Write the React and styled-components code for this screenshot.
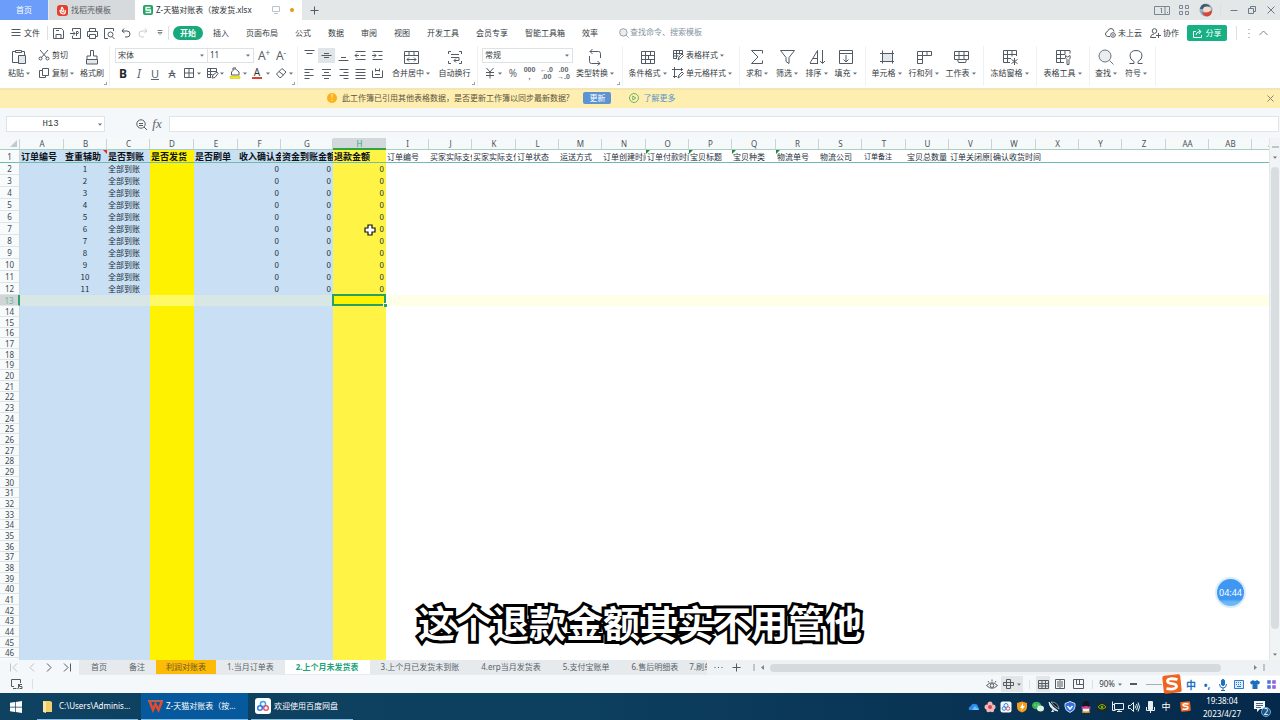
import React from "react";
import styled, { createGlobalStyle, css } from "styled-components";

const UI = '"Noto Sans", "Noto Sans CJK SC", sans-serif';
const CELL = '"Noto Sans CJK SC", sans-serif';

const Global = createGlobalStyle`
  *, *::before, *::after { box-sizing: border-box; }
  html, body { margin: 0; }
  body { font: 8px/12px ${UI}; color: #353b41; overflow: hidden; }
  button, input, select { font: inherit; color: inherit; margin: 0; padding: 0; border: 0; background: none; border-radius: 0; outline: 0; }
  button { white-space: nowrap; }
  svg { display: block; flex: none; overflow: visible; }
`;

/* ---------- icons ---------- */

const Glyph = ({ w = 16, h = 16, sw = 1, color = "#525b63", children }) => (
  <svg width={w} height={h} viewBox={`0 0 ${w} ${h}`} fill="none" stroke={color} strokeWidth={sw} aria-hidden="true">
    {children}
  </svg>
);

const Lines = ({ d, ...p }) => (
  <Glyph {...p}>
    <path d={d} />
  </Glyph>
);

const Caret = ({ color = "#6b7379" }) => (
  <svg width="4" height="3" viewBox="0 0 4 3" aria-hidden="true">
    <path d="M0 0.500h4L2 2.800z" fill={color} />
  </svg>
);

const PasteIcon = () => (
  <Glyph>
    <path d="M4 2.500H1.500v11H8M11 2.500h2.500V6M4.500 1.500h6v2h-6z" />
    <path d="M7.500 6.500h7v8h-7z" fill="#e3e8ec" />
  </Glyph>
);
const CutIcon = () => (
  <Glyph w={12} h={12}>
    <path d="M2 1l7 8M10 1L3 9" />
    <circle cx="2.500" cy="9.500" r="1.500" />
    <circle cx="9.500" cy="9.500" r="1.500" />
  </Glyph>
);
const CopyIcon = () => <Lines w={12} h={12} d="M4.500 1.500h6v7h-6zM4.500 3.500h-3v7h6v-2" />;
const BrushIcon = () => (
  <Glyph>
    <path d="M6.500 7V1.500h3V7h3.500v3.500h-10V7z" />
    <path d="M2.500 10.500h11v4.500h-11z" fill="#e3e8ec" />
  </Glyph>
);
const BorderIcon = () => <Lines w={12} h={12} d="M1.500 1.500h9v9h-9zM6 1.500v9M1.500 6h9" />;
const EditCellIcon = () => <Lines w={12} h={12} d="M10.500 5V1.500h-9v9H5M1.500 4.500h9M1.500 7.500h5M4.500 1.500v9M6 11l1-3 4-3 1 1.500-3 4z" />;
const FillIcon = () => (
  <Glyph w={12} h={12}>
    <path d="M2.500 5L6 1.500 10 5v3H2.500zM4 3V1h3" />
    <path d="M1 9h10v2.500H1z" fill="#f6e71d" stroke="#c9bb2a" strokeWidth="0.500" />
  </Glyph>
);
const EraserIcon = () => <Lines w={12} h={12} d="M1.500 7L7 1.500 11 5 6 10.500H4.500zM4 4.500L8.500 8" />;

const align = {
  top: "M1.500 1.500h10M3.500 4.500h6",
  middle: "M1.500 6.500h10M4 4.500h5M4 8.500h5",
  bottom: "M1.500 11.500h10M4 8.500h5",
  outdent: "M1.500 2.500h10M6.500 6.500h5M1.500 10.500h10M1 6.500h4M3 4.500l-2 2 2 2",
  indent: "M1.500 2.500h10M7.500 6.500h4M1.500 10.500h10M1 6.500h4M3 4.500l2 2-2 2",
  left: "M1.500 2.500h9M1.500 5.500h5M1.500 8.500h9M1.500 11.500h5",
  center: "M2 2.500h9M4 5.500h5M2 8.500h9M4 11.500h5",
  right: "M2.500 2.500h9M6.500 5.500h5M2.500 8.500h9M6.500 11.500h5",
  justify: "M1.500 2.500h10M1.500 5.500h10M1.500 8.500h10M1.500 11.500h10",
  spread: "M1.500 3.500v7h10v-7M4 3.500h5M4.500 1.500v3M8.500 1.500v3M4 7.500h5",
};
const AlignIcon = ({ kind }) => <Lines w={13} h={13} d={align[kind]} />;

const MergeIcon = () => <Lines d="M1.500 2.500h14v12h-14zM1.500 6.500h14M6 2.500v4M11 2.500v4M4 10.500h9M6 8.500l-2 2 2 2M11 8.500l2 2-2 2" />;
const WrapIcon = () => <Lines d="M4 2.500H1.500V5M12 2.500h2.500V5M4 14.500H1.500V12M12 14.500h2.500V12M4 5.500h8M4 8.500h8v3H7M9 9.500l-2 2 2 2" />;
const ConvertIcon = () => <Lines d="M13.500 9V4.500q0-2-2-2H3M5.500 0L3 2.500 5.500 5M2.500 7v5.500q0 2 2 2H13M10.500 12l2.500 2.500-2.500 2" />;
const CondIcon = () => <Lines d="M1.500 2.500h13v12h-13zM1.500 6.500h13M1.500 10.500h13M5.500 2.500v4M10.500 2.500v4M8.500 6.500v4M5.500 6.500v8M10.500 10.500v4" />;
const TableStyleIcon = () => <Lines w={12} h={12} d="M10.500 5V1.500h-9v8H5M1.500 4.500h9M1.500 7h5M4.500 1.500v8M7.500 1.500v4M6 11l1-3 3-3 1.500 1.500-3 3z" />;
const CellStyleIcon = () => <Lines w={12} h={12} d="M0 2.500h11M2.500 0v11M9.500 1v3M1 9.500h4M6 11l1-3 3-3 1.500 1.500-3 3z" />;
const SumIcon = () => <Lines d="M13.500 4.500v-3h-11L9 8l-6.500 6.500h11v-3" />;
const FunnelIcon = () => <Lines d="M1.500 1.500h14L10 8.500v6l-3-2v-4z" />;
const SortIcon = () => <Lines d="M1 14L8.500 1.500V14M1 14.500h8M4 9.500h4.500M13.500 1v13M11 12l2.500 2.500L16 12" />;
const FillDownIcon = () => <Lines d="M1.500 1.500h13v13h-13zM1.500 4.500h13M8 6v7M5.500 10.500L8 13l2.500-2.500" />;
const CellIcon = () => (
  <Glyph>
    <path d="M3.500 4.500h10v8h-10z" fill="#e3e8ec" />
    <path d="M1 4.500h14M1 12.500h14M3.500 1.500v13M13.500 1.500v13" />
  </Glyph>
);
const RowColIcon = () => <Lines d="M1.500 2.500h14v4h-9v8h-5zM6.500 2.500v4M11 2.500v4M1.500 6.500h5M1.500 10.500h5" />;
const SheetIcon = () => <Lines d="M1.500 2.500h14v8h-2l-1 3h-7l-1-3h-3zM1.500 6.500h14M6 2.500v8M11 2.500v8M4.500 10.500h9" />;
const FreezeIcon = () => <Lines d="M14.500 7V1.500h-13v12H8M1.500 5.500h13M1.500 9.500H9M5.500 1.500v12M10 1.500v6M12.500 9v7M9.500 10.500l6 4M15.500 10.500l-6 4" />;
const ToolsIcon = () => <Lines d="M15 4.500v-3H1.500v12H9M1.500 5.500H10M1.500 9.500H10M5.500 1.500v12M10 1.500v4M12 15.500v-5q-2-1-1.500-4l2 1.500L15 6.500q1 3-1 4v5z" />;
const FindIcon = ({ s = 16 }) => (
  <svg width={s} height={s} viewBox="0 0 16 16" fill="none" stroke="#6b747b" aria-hidden="true">
    <circle cx="7" cy="7" r="6" fill="#e9edef" />
    <path d="M11.500 11.500l4 4" />
  </svg>
);
const OmegaIcon = () => <Lines d="M1.500 14.500H6v-2Q2 10.500 2 7q0-5.500 6-5.500T14 7q0 3.500-4 5.500v2h4.500" />;

/* ---------- title bar ---------- */

const Window = styled.div`
  display: flex;
  flex-direction: column;
  height: 100vh;
  position: relative;
  overflow: hidden;
  background: #fff;
`;
const TitleBar = styled.header`
  display: flex;
  align-items: center;
  flex: none;
  height: 20px;
  background: #e3e7e8;
`;
const FileTab = styled.button`
  display: flex;
  align-items: center;
  gap: 3px;
  height: 20px;
  width: ${(p) => p.$w}px;
  padding: 0 8px;
  justify-content: ${(p) => (p.$home ? "center" : "flex-start")};
  background: ${(p) => (p.$home ? "#6c9dfb" : p.$active ? "#fff" : "#d6dadd")};
  color: ${(p) => (p.$home ? "#fff" : p.$active ? "#2b3036" : "#5a6066")};
  margin-right: ${(p) => (p.$home ? 1 : 0)}px;
`;
const TabEnd = styled.span`
  display: flex;
  align-items: center;
  gap: 10px;
  margin-left: auto;
`;
const ModifiedDot = styled.span`
  width: 4px;
  height: 4px;
  border-radius: 50%;
  background: #e09a1c;
`;
const IconButton = styled.button`
  display: flex;
  align-items: center;
  justify-content: center;
  flex: none;
  width: ${(p) => p.$w || 16}px;
  height: ${(p) => p.$h || 15}px;
  background: ${(p) => (p.$on ? "#dfe5e9" : "transparent")};
`;
const Spacer = styled.div`
  flex: 1;
`;
const Rule = styled.span`
  flex: none;
  width: 1px;
  height: ${(p) => p.$h || 14}px;
  margin: 0 ${(p) => p.$m || 0}px;
  background: #dde1e4;
`;

/* ---------- menu row ---------- */

const MenuBar = styled.nav`
  display: flex;
  align-items: center;
  flex: none;
  height: 26px;
  padding-right: 6px;
`;
const FileMenu = styled.button`
  display: flex;
  align-items: center;
  gap: 3px;
  width: 47px;
  padding-left: 11px;
`;
const QuickTools = styled.div`
  display: flex;
  align-items: center;
  gap: 1px;
  padding-left: 2px;
`;
const MenuItems = styled.div`
  display: flex;
  align-items: center;
  gap: 17px;
  padding-left: 4px;
`;
const MenuItem = styled.button`
  height: 14px;
  line-height: 12px;
  ${(p) =>
    p.$active &&
    css`
      width: 30px;
      margin-right: -7px;
      border-radius: 7px;
      background: #16a97c;
      color: #fff;
      font-weight: 700;
    `}
`;
const SearchBox = styled.label`
  display: flex;
  align-items: center;
  gap: 1px;
  margin-left: 21px;
  input {
    width: 90px;
    height: 12px;
    margin-bottom: 2px;
  }
  input::placeholder {
    color: #8494a4;
    opacity: 1;
  }
`;
const AccountLink = styled.button`
  display: flex;
  align-items: center;
  gap: 2px;
  margin-right: 8px;
`;
const ShareButton = styled.button`
  display: flex;
  align-items: center;
  justify-content: center;
  gap: 4px;
  width: 40px;
  height: 16px;
  border-radius: 2px;
  background: #16b084;
  color: #fff;
`;

/* ---------- ribbon ---------- */

const Ribbon = styled.section`
  display: flex;
  flex: none;
  height: 42px;
  overflow: hidden;
`;
const Group = styled.div`
  display: flex;
  flex: none;
  position: relative;
  width: ${(p) => p.$w}px;
  height: 40px;
  padding-left: ${(p) => p.$pad || 0}px;
  border-right: 1px solid #eff2f3;
  ${(p) =>
    p.$corner &&
    css`
      &::after {
        content: "";
        position: absolute;
        right: 2px;
        bottom: 1px;
        width: 3px;
        height: 3px;
        border: solid #9aa1a7;
        border-width: 0 1px 1px 0;
      }
    `}
`;
const Big = styled.button`
  display: flex;
  flex-direction: column;
  align-items: center;
  flex: none;
  gap: 2px;
  width: ${(p) => p.$w}px;
  height: 38px;
  padding-top: 3px;
`;
const Caption = styled.span`
  display: flex;
  align-items: center;
  gap: 2px;
`;
const Stack = styled.div`
  display: flex;
  flex-direction: column;
  gap: 2px;
  width: ${(p) => p.$w}px;
  padding-top: 1px;
`;
const Row = styled.div`
  display: flex;
  align-items: center;
  height: 16px;
`;
const Small = styled.button`
  display: flex;
  align-items: center;
  gap: 2px;
  height: 16px;
`;
const Split = styled.button`
  display: flex;
  align-items: center;
  justify-content: space-between;
  width: 23px;
  height: 16px;
  padding: 0 3px 0 2px;
`;
const Letter = styled.button`
  width: ${(p) => p.$w || 16}px;
  height: 16px;
  line-height: 15px;
  font-size: ${(p) => p.$size || 12}px;
  font-weight: ${(p) => (p.$bold ? 700 : 400)};
  font-style: ${(p) => (p.$italic ? "italic" : "normal")};
  text-decoration: ${(p) => p.$deco || "none"};
  color: ${(p) => (p.$bold ? "#23282d" : "#5b646c")};
  sup {
    font-size: 8px;
    line-height: 0;
    vertical-align: 4px;
  }
`;
const NumLabel = styled.button`
  width: 17px;
  height: 16px;
  font: 700 7px/7px "Liberation Sans", sans-serif;
  white-space: pre-line;
  color: #5b646c;
`;
const RedA = styled.span`
  display: block;
  width: 10px;
  height: 12px;
  line-height: 10px;
  font-size: 10px;
  text-align: center;
  border-bottom: 2px solid #d8442f;
`;
const SelectFrame = styled.label`
  display: flex;
  align-items: center;
  position: relative;
  width: ${(p) => p.$w}px;
  height: 15px;
  border: 1px solid #dde2e5;
  margin-left: ${(p) => (p.$join ? -1 : 0)}px;
  padding-right: 3px;
  select {
    flex: 1;
    min-width: 0;
    appearance: none;
    padding-left: 2px;
    height: 13px;
  }
`;

/* ---------- banner and formula bar ---------- */

const Banner = styled.div`
  display: flex;
  align-items: center;
  flex: none;
  height: 20px;
  padding: 0 6px 2px 327px;
  background: #feeeb0;
  border-top: 2px solid #f4e5b4;
  color: #5c553f;
  a {
    margin-left: 4px;
    color: #5b97c9;
    text-decoration: none;
  }
`;
const WarnDot = styled.span`
  width: 10px;
  height: 10px;
  margin-right: 5px;
  border-radius: 50%;
  background: #fbb117;
  color: #fff;
  line-height: 10px;
  text-align: center;
`;
const UpdateButton = styled.button`
  width: 28px;
  height: 12px;
  margin: 0 18px 0 14px;
  border-radius: 2px;
  background: #5b93d3;
  color: #fff;
`;
const FormulaBar = styled.div`
  display: flex;
  align-items: center;
  flex: none;
  height: 30px;
  padding: 2px 1px 0 6px;
  background: #f5f8fa;
`;
const NameBox = styled.label`
  display: flex;
  align-items: center;
  width: 99px;
  height: 16px;
  margin-right: 30px;
  padding-right: 2px;
  border: 1px solid #dfe4e7;
  background: #fff;
  input {
    flex: 1;
    min-width: 0;
    padding-right: 4px;
    text-align: center;
    font: 9px/12px "Liberation Mono", monospace;
  }
`;
const FxButton = styled.button`
  width: 20px;
  margin-right: 2px;
  font: italic 13px/14px "Liberation Serif", serif;
  color: #5b646c;
`;
const FormulaInput = styled.input`
  flex: 1;
  height: 16px;
  border: 1px solid #dfe4e7;
  background: #fff;
  padding: 0 4px;
`;

/* ---------- sheet ---------- */

const SheetArea = styled.main`
  display: flex;
  flex: 1;
  min-height: 0;
  position: relative;
`;
const GridView = styled.div`
  flex: 1;
  min-width: 0;
  overflow: hidden;
`;
const Grid = styled.table`
  table-layout: fixed;
  width: 100%;
  border-collapse: separate;
  border-spacing: 0;
  font-family: ${CELL};
  line-height: 9px;
  color: #24303c;
`;
const Tr = styled.tr`
  height: ${(p) => p.$h}px;
`;
const ColHead = styled.th`
  position: relative;
  padding: 0;
  overflow: hidden;
  font-weight: 400;
  color: ${(p) => (p.$on ? "#2da77d" : "#4a5258")};
  background: ${(p) => (p.$on ? "#d3d8db" : "#f5f9fa")};
  border-bottom: ${(p) => (p.$on ? "2px solid #2fa43f" : "1px solid #a9cfc5")};
  font-family: ${UI};
  &::after {
    content: "";
    position: absolute;
    right: 0;
    top: 1px;
    bottom: 0;
    width: 1px;
    background: #ccd4d8;
  }
`;
const CornerMark = styled.svg`
  margin-left: 10px;
`;
const RowHead = styled.th`
  padding: 0;
  font-weight: 400;
  font-family: ${UI};
  color: ${(p) => (p.$on ? "#6cb8a0" : "#434b52")};
  background: ${(p) => (p.$on ? "#d0d6d8" : "#f8fbfb")};
  border-bottom: 1px solid ${(p) => (p.$frozen ? "#6fbcae" : "#dfe4e7")};
  border-right: ${(p) => (p.$on ? "2px solid #2fa06e" : "1px solid #cfd6da")};
`;
const tones = {
  blue: "#c9dff3",
  yellow: "#fff200",
  lemon: "#fff445",
  blueHi: "#d9e6e6",
  yellowHi: "#fff966",
  whiteHi: "#fffee6",
  none: "#fff",
};
const Cell = styled.td`
  position: relative;
  padding: 0 2px 2px ${(p) => (p.$align === "right" ? 0 : 1)}px;
  overflow: ${(p) => (p.$spill ? "visible" : "hidden")};
  z-index: ${(p) => (p.$spill ? 1 : 0)};
  white-space: nowrap;
  text-align: ${(p) => p.$align || "left"};
  background: ${(p) => tones[p.$tone || "none"]};
  ${(p) =>
    p.$empty &&
    css`
      padding: 0;
    `}
  ${(p) =>
    p.$head &&
    css`
      border-bottom: 1px solid #6fbcae;
      color: ${p.$bold ? "#0d1217" : "#24303c"};
      font-size: ${p.$bold ? 9 : p.$minor ? 7 : 8}px;
      font-weight: ${p.$bold ? 700 : 400};
      padding: 0 0 0 ${p.$minor ? 2 : 1}px;
    `}
  ${(p) =>
    p.$flag &&
    css`
      &::before {
        content: "";
        position: absolute;
        top: 0;
        ${p.$flag === "note" ? "right: 0; border-right: 4px solid #e02b2b;" : "left: 0; border-left: 4px solid #1c8a3c;"}
        border-bottom: 4px solid transparent;
      }
    `}
`;
const SelectedCell = styled(Cell)`
  overflow: visible;
  z-index: 1;
  &::before {
    content: "";
    position: absolute;
    inset: -1px 0 0 -1px;
    border: 2px solid #27a062;
  }
  &::after {
    content: "";
    position: absolute;
    right: -1px;
    bottom: -1px;
    width: 4px;
    height: 4px;
    background: #27a062;
    border: solid #fff;
    border-width: 1px 0 0 1px;
  }
`;
const VScroll = styled.div`
  display: flex;
  flex-direction: column;
  align-items: center;
  flex: none;
  width: 11px;
  padding: 8px 0 4px;
  gap: 8px;
  background: #f1f4f5;
  border-left: 1px solid #e3e7ea;
`;
const SplitGrip = styled.span`
  flex: none;
  width: ${(p) => (p.$v ? 2 : 7)}px;
  height: ${(p) => (p.$v ? 7 : 2)}px;
  background: #bfc6ca;
`;
const VThumb = styled.div`
  flex: 1;
  width: 8px;
  margin-bottom: 16px;
  border-radius: 4px;
  background: #d8dde0;
`;
const CrossCursor = styled.div`
  position: absolute;
  left: 364px;
  top: 86px;
`;
const TimerBubble = styled.div`
  position: absolute;
  right: 34px;
  top: 439px;
  width: 31px;
  height: 31px;
  border: 2px solid #d9ecfb;
  border-radius: 50%;
  background: linear-gradient(#3f97f2 0 75%, #6bb8f6 85%);
  color: #fff;
  font-size: 9px;
  line-height: 27px;
  text-align: center;
`;

/* ---------- sheet tabs and status ---------- */

const SheetBar = styled.nav`
  display: flex;
  align-items: center;
  flex: none;
  height: 15px;
  background: #eff2f4;
`;
const SheetNav = styled.div`
  display: flex;
  align-items: center;
  gap: 1px;
  width: 79px;
  height: 15px;
  padding-left: 5px;
  background: #f5f8fa;
`;
const SheetTabs = styled.div`
  display: flex;
  flex: none;
  width: 628px;
  height: 15px;
  padding-left: 1px;
  overflow: hidden;
  background: #e6eaec;
`;
const SheetTab = styled.button`
  flex: none;
  height: 14px;
  line-height: 14px;
  padding: 0 ${(p) => (p.$gold ? 10 : 11)}px;
  padding-left: ${(p) => (p.$tight ? 0 : p.$gold ? 10 : 11)}px;
  color: ${(p) => (p.$active ? "#1ba37b" : p.$gold ? "#6e5a1f" : "#59636b")};
  background: ${(p) => (p.$active ? "#fff" : p.$gold ? "#fdbb05" : "transparent")};
  font-weight: ${(p) => (p.$active ? 700 : 400)};
`;
const HScroll = styled.div`
  display: flex;
  align-items: center;
  flex: 1;
  gap: 6px;
  height: 15px;
  padding: 0 15px 0 10px;
`;
const HThumb = styled.div`
  flex: 1;
  height: 8px;
  margin-right: 27px;
  border-radius: 4px;
  background: #d5dadd;
`;
const StatusBar = styled.footer`
  display: flex;
  align-items: center;
  flex: none;
  height: 18px;
  padding: 0 22px 0 8px;
  background: #f5f8fa;
`;
const ViewButton = styled.button`
  display: flex;
  align-items: center;
  justify-content: center;
  gap: 3px;
  width: ${(p) => p.$w}px;
  height: 16px;
  background: ${(p) => (p.$on ? "#e2e6e9" : "transparent")};
`;
const ZoomRange = styled.input`
  appearance: none;
  width: 112px;
  height: 1px;
  margin-left: 4px;
  background: #a8aeb3;
  &::-webkit-slider-thumb {
    appearance: none;
    width: 6px;
    height: 6px;
    background: #8a9197;
  }
`;

/* ---------- taskbar and overlays ---------- */

const TaskBar = styled.footer`
  display: flex;
  align-items: center;
  flex: none;
  height: 27px;
  padding-right: 8px;
  background: linear-gradient(90deg, #0f4160 0, #0d3f5f 45%, #05294a 100%);
  color: #fff;
`;
const StartButton = styled.button`
  display: flex;
  align-items: center;
  justify-content: center;
  width: 32px;
  height: 27px;
  margin-right: 5px;
`;
const Task = styled.button`
  display: flex;
  align-items: center;
  gap: ${(p) => p.$gap}px;
  width: ${(p) => p.$w}px;
  height: 27px;
  margin-right: 3px;
  padding-left: ${(p) => p.$pad}px;
  border-bottom: 1px solid #84bfe8;
  background: ${(p) => (p.$active ? "#07599d" : "transparent")};
`;
const Tray = styled.div`
  display: flex;
  align-items: center;
`;
const TrayItem = styled.button`
  display: flex;
  align-items: center;
  justify-content: center;
  width: ${(p) => p.$w || 16}px;
  height: 27px;
  position: relative;
  font-size: ${(p) => p.$size || 8}px;
`;
const Clock = styled.time`
  width: 52px;
  text-align: center;
  line-height: 13px;
`;
const Badge = styled.span`
  position: absolute;
  right: 1px;
  bottom: 3px;
  width: 10px;
  height: 10px;
  border: 1px solid #6aa4cf;
  border-radius: 50%;
  background: #14568c;
  line-height: 8px;
  text-align: center;
`;
const ImeBar = styled.div`
  position: absolute;
  right: 0;
  bottom: 27px;
  display: flex;
  align-items: center;
  width: 118px;
  height: 17px;
  padding-left: 21px;
  background: #fff;
  color: #1a6fc0;
`;
const ImeItem = styled.button`
  display: flex;
  align-items: center;
  justify-content: center;
  width: 16px;
  height: 16px;
  font-size: 10px;
  font-weight: 700;
`;
const ImeLogo = styled.span`
  position: absolute;
  left: 0;
  top: -2px;
`;
const Subtitle = styled.p`
  position: absolute;
  left: 0;
  right: 0;
  bottom: 76px;
  margin: 0;
  text-align: center;
  font: 700 37px/44px "Noto Sans CJK SC", sans-serif;
  color: #fff;
  -webkit-text-stroke: 6px #000;
  paint-order: stroke fill;
  stroke-linejoin: round;
  pointer-events: none;
`;

/* ---------- data ---------- */

// The unnamed last column takes whatever width the window has left.
const columns = [..."A B C D E F G H I J K L M N O P Q R S T U V W X Y Z AA AB AC".split(" "), ""];
const widths = [44, 43, 43, 44, 44, 43, 52, 53, 43, 43, 44, 43, 43, 44, 43, 43, 44, 43, 43, 44, 43, 43, 44, 43, 43, 44, 43, 43, 43];
const heads = ["订单编号", "查重辅助", "是否到账", "是否发货", "是否刷单", "收入确认金额", "资金到账金额", "退款金额", "订单编号", "买家实际支付", "买家实际支付", "订单状态", "运送方式", "订单创建时间", "订单付款时间", "宝贝标题", "宝贝种类", "物流单号", "物流公司", "订单备注", "宝贝总数量", "订单关闭原因", "确认收货时间"];
const flags = { B: "note", O: "err", P: "err", Q: "err", R: "err" };
const toneByColumn = { A: "blue", B: "blue", C: "blue", D: "yellow", E: "blue", F: "blue", G: "blue", H: "lemon" };
const hiTone = { blue: "blueHi", yellow: "yellowHi", none: "whiteHi" };
const rowHeight = (n) => (n === 1 ? 13 : n < 13 ? 12 : n === 13 ? 11 : (n - 13) % 3 === 0 ? 10 : 11);

const valueAt = (col, n) => {
  if (n > 12) return ["", "left"];
  if (col === "B") return [n - 1, "center"];
  if (col === "C") return ["全部到账", "left"];
  if (["F", "G", "H"].includes(col)) return [0, "right"];
  return ["", "left"];
};

const SheetRow = ({ n }) => (
  <Tr $h={rowHeight(n)}>
    <RowHead scope="row" $on={n === 13} $frozen={n === 1}>{n}</RowHead>
    {columns.map((c, i) => {
      const tone = toneByColumn[c] || "none";
      if (n === 1)
        return (
          <Cell key={c} $head $bold={i < 8} $minor={c === "T"} $spill={c === "W"} $flag={flags[c]} $tone={tone}>
            {heads[i]}
          </Cell>
        );
      if (n === 13 && c === "H") return <SelectedCell key={c} $empty $tone="yellow" />;
      const [v, a] = valueAt(c, n);
      return (
        <Cell key={c} $align={a} $empty={v === ""} $tone={n === 13 ? hiTone[tone] : tone}>
          {v}
        </Cell>
      );
    })}
  </Tr>
);

const BigButton = ({ w, icon, label, caret = true }) => (
  <Big $w={w}>
    {icon}
    <Caption>
      {label}
      {caret && <Caret />}
    </Caption>
  </Big>
);

const SogouMark = ({ s }) => (
  <svg width={s} height={s} viewBox="0 0 20 20" aria-hidden="true">
    <rect x="1" y="1" width="18" height="18" rx="2" fill="#ee6420" transform="rotate(-6 10 10)" />
    <path d="M15.500 5.500Q6 3.500 5.500 7q0 2.200 4.500 2.700 5 .6 4.500 3-1 3.300-10 2" fill="none" stroke="#fff" strokeWidth="2.800" />
  </svg>
);

const trayIcons = [
  ["云盘", <><path d="M1 9q-1-3 2-4 1-3 4-2 3 0 3 3 2 1 1 3z" fill="#2b8cf0" /><path d="M4 9l3-4 4 4z" fill="#75bdfa" /></>],
  ["花瓣", <><circle cx="6" cy="3" r="2.500" fill="#f3b8b8" /><circle cx="3" cy="6" r="2.500" fill="#f3b8b8" /><circle cx="9" cy="6" r="2.500" fill="#f3b8b8" /><circle cx="4.500" cy="9" r="2.200" fill="#f3b8b8" /><circle cx="8" cy="9" r="2.200" fill="#f3b8b8" /><circle cx="6" cy="6" r="2" fill="#d64a55" /></>],
  ["百度网盘", <><rect x="0.500" y="0.500" width="11" height="11" rx="2" fill="#f3f8fd" /><circle cx="6" cy="4.500" r="2" fill="none" stroke="#2e86e8" /><circle cx="4" cy="7.500" r="1.800" fill="none" stroke="#2e86e8" /><circle cx="8" cy="7.500" r="1.800" fill="none" stroke="#e05a6a" /></>],
  ["安全卫士", <><path d="M6 0.500l5 1.500v4q0 4-5 5.500-5-1.500-5-5.500V2z" fill="#f59b1c" /><path d="M7 2l-3 5 2 0-1 3 4-5H7z" fill="#fff" /></>],
  ["微信", <><ellipse cx="4.500" cy="4.500" rx="4.500" ry="3.800" fill="#35b558" /><ellipse cx="8.500" cy="7.500" rx="3.500" ry="3" fill="#d9f2df" /><circle cx="3" cy="4" r="0.600" fill="#fff" /><circle cx="6" cy="4" r="0.600" fill="#fff" /></>],
  ["雷达", <><path d="M1 1q1 8 9 9Q5 7 1 1z" fill="#e8ecef" stroke="#e8ecef" /><path d="M3 1q7 0 8 7Q7 6 3 1z" fill="#15181b" stroke="#cfd5da" strokeWidth="0.600" /><path d="M3 11h3l-1-3z" fill="#e8ecef" /></>],
  ["防护", <><path d="M6 0.500l5 2v3q0 4-5 6-5-2-5-6v-3z" fill="#2f6fe0" stroke="#fff" strokeWidth="0.800" /><path d="M3.500 5L6 8l2.500-3" fill="none" stroke="#fff" strokeWidth="1.500" /></>],
  ["QQ", <><ellipse cx="6" cy="4" rx="3.500" ry="4" fill="#15181c" /><ellipse cx="6" cy="8.500" rx="3.500" ry="3" fill="#f5f5f5" /><path d="M1.500 5.500h9v2.200h-9z" fill="#e0359a" /><path d="M2 11h8" stroke="#f0a41c" strokeWidth="1.500" /></>],
  ["NVIDIA", <><rect x="1" y="1.500" width="10" height="9" fill="#20262a" /><path d="M2 6q4-5 8 0-4 4-8 0z" fill="none" stroke="#76b900" /><circle cx="6" cy="6" r="1.200" fill="#76b900" /></>],
  ["网络", <path d="M2.500 2.500h9v6h-9zM5 10.500h5M7 8.500v2M0.500 0.500v9h3M0.500 3.500h2" fill="none" stroke="#e8eef2" />],
  ["音量", <path d="M0.500 4.500h2l3-3v9l-3-3h-2zM7 4.500q1 1.500 0 3M8.500 3q2 3 0 6M10 1.500q3 4.500 0 9" fill="none" stroke="#e8eef2" />],
  ["麦克风", <><rect x="4" y="0" width="5" height="9" rx="1" fill="#e8eef2" /><path d="M2.500 6v3.500h8V6M6.500 9v3" fill="none" stroke="#e8eef2" /></>],
];

export default function App() {
  const rows = Array.from({ length: 47 }, (_, i) => i + 1);
  return (
    <>
      <Global />
      <Window>
        <TitleBar>
          <FileTab $w={48} $home>首页</FileTab>
          <FileTab $w={86}>
            <svg width="11" height="11" viewBox="0 0 11 11" aria-hidden="true">
              <rect width="11" height="11" rx="3" fill="#e3402f" />
              <path d="M5 2q-2 4 1 5 1-2-1-5M3 5q0 4 4 4 2-1 1-4" fill="none" stroke="#fff" strokeWidth="1.200" />
            </svg>
            找稻壳模板
          </FileTab>
          <FileTab $w={167} $active>
            <svg width="10" height="10" viewBox="0 0 10 10" aria-hidden="true">
              <rect width="10" height="10" rx="2" fill="#1fa463" />
              <path d="M7.500 2.500H3V5h4.500v2.500H2.500" fill="none" stroke="#fff" strokeWidth="1.300" />
            </svg>
            Z-天猫对账表（按发货.xlsx
            <TabEnd>
              <Lines w={8} h={8} color="#bcc4ca" d="M0.500 0.500h7v5h-7zM2 7.500h4" />
              <ModifiedDot />
            </TabEnd>
          </FileTab>
          <IconButton $w={24} aria-label="新建标签">
            <Lines w={9} h={9} d="M4.500 0.500v8M0.500 4.500h8" />
          </IconButton>
          <Spacer />
          <IconButton $w={22} aria-label="窗口数">
            <Lines w={16} h={9} color="#7b8794" d="M0.500 0.500h15v8h-15zM11 0.500v8M7.500 2v5M6.500 3l1-1M13 6.500h1" />
          </IconButton>
          <IconButton $w={22} aria-label="应用">
            <Lines w={10} h={10} color="#7b8794" d="M0.500 0.500h3v3h-3zM6.500 0.500h3v3h-3zM0.500 6.500h3v3h-3zM6.500 6.500h3v3h-3z" />
          </IconButton>
          <IconButton $w={21} aria-label="账号">
            <svg width="14" height="14" viewBox="0 0 14 14" aria-hidden="true">
              <circle cx="7" cy="7" r="6.500" fill="#8fb4c6" />
              <path d="M1 6q1-5 5-5t5 3l-4 2z" fill="#3f5c70" />
              <ellipse cx="8" cy="6.500" rx="4" ry="3" fill="#f3dccd" />
              <path d="M3 9q5 2 10-2 0 6-5 6.500Q4 13 3 9z" fill="#d8453a" />
            </svg>
          </IconButton>
          <Rule $m={4} />
          <IconButton $w={17} aria-label="最小化">
            <Lines w={8} h={8} color="#6e7a85" d="M0.500 4.500h7" />
          </IconButton>
          <IconButton $w={20} aria-label="还原">
            <Lines w={9} h={9} color="#6e7a85" d="M0.500 2.500h5v5h-5zM2.500 2V0.500h5v5H6" />
          </IconButton>
          <IconButton $w={18} aria-label="关闭">
            <Lines w={8} h={8} color="#6e7a85" d="M0.500 0.500l7 7M7.500 0.500l-7 7" />
          </IconButton>
        </TitleBar>

        <MenuBar>
          <FileMenu>
            <Lines w={10} h={8} d="M0.500 0.500h9M0.500 3.500h9M0.500 6.500h9" />
            文件
          </FileMenu>
          <Rule />
          <QuickTools>
            <IconButton aria-label="保存">
              <Lines w={11} h={11} d="M0.500 0.500h8l2 2v8h-10zM3 10.500v-4h5v4M3 2.500h3" />
            </IconButton>
            <IconButton aria-label="输出为PDF">
              <Lines w={11} h={11} d="M2.500 3V0.500h8v10h-8V8M0 5.500h5M3 3.500l2 2-2 2M6.500 8V3.500h1.500q1 1 0 2H6.500" />
            </IconButton>
            <IconButton aria-label="打印">
              <Lines w={11} h={11} d="M2.500 3V0.500h6V3M2.500 8.500h-2v-5h10v5h-2M2.500 6.500h6v4h-6z" />
            </IconButton>
            <IconButton aria-label="打印预览">
              <Glyph w={11} h={11}><path d="M4 10.500H0.500v-10h9V3M8 8.500l2.500 2.500" /><circle cx="6.500" cy="6.500" r="2.500" /></Glyph>
            </IconButton>
            <IconButton aria-label="撤销">
              <Lines w={10} h={10} d="M3 0.500l-2 2.500 2.500 2M1 3h5q3 0 3 3t-3 3H4" />
            </IconButton>
            <IconButton aria-label="恢复">
              <Lines w={10} h={10} color="#c8cdd1" d="M7 0.500L9 3 6.500 5M9 3H4Q1 3 1 6t3 3h2" />
            </IconButton>
            <IconButton aria-label="自定义快速访问">
              <Lines w={6} h={6} color="#7b848b" d="M0.500 0.500h5M1 2.500h4L3 4.500z" />
            </IconButton>
          </QuickTools>
          <Rule />
          <MenuItems>
            <MenuItem $active>开始</MenuItem>
            {["插入", "页面布局", "公式", "数据", "审阅", "视图", "开发工具", "会员专享", "智能工具箱", "效率"].map((t) => (
              <MenuItem key={t}>{t}</MenuItem>
            ))}
          </MenuItems>
          <SearchBox>
            <FindIcon s={10} />
            <input type="text" aria-label="搜索" placeholder="查找命令、搜索模板" />
          </SearchBox>
          <Spacer />
          <AccountLink>
            <Glyph w={11} h={10}><path d="M5 8.500H2.500q-2-.5-2-2.500 0-2 2-2.500 1-3 3.500-3t3 3" /><circle cx="8" cy="7" r="2.300" /><path d="M7 7h2" /></Glyph>
            未上云
          </AccountLink>
          <AccountLink>
            <Glyph w={11} h={10}><circle cx="4.500" cy="3" r="2.300" /><path d="M0.500 9.500q0-3 3.500-3.500M0.500 9.500H6M8.500 5v5M6 7.500h5" /></Glyph>
            协作
          </AccountLink>
          <ShareButton>
            <Lines w={9} h={9} color="#fff" d="M3 2.500H0.500v6h8V6M3 6q0-3 4-3.500M5.500 0.500L8 2.500 6 5" />
            分享
          </ShareButton>
          <Rule $m={9} />
          <IconButton $w={6} aria-label="更多">
            <Lines w={2} h={9} color="#7b848b" d="M0.500 0.500h1M0.500 4.500h1M0.500 8.500h1" />
          </IconButton>
          <IconButton $w={22} aria-label="收起功能区">
            <Lines w={9} h={6} color="#7b848b" d="M0.500 5l4-4 4 4" />
          </IconButton>
        </MenuBar>

        <Ribbon>
          <Group $w={110} $corner>
            <BigButton w={38} icon={<PasteIcon />} label="粘贴" />
            <Stack $w={37}>
              <Small><CutIcon />剪切</Small>
              <Small><CopyIcon />复制<Caret /></Small>
            </Stack>
            <BigButton w={34} icon={<BrushIcon />} label="格式刷" caret={false} />
          </Group>
          <Group $w={188} $pad={5} $corner>
            <Stack $w={182}>
              <Row>
                <SelectFrame $w={93}>
                  <select aria-label="字体" defaultValue="宋体"><option>宋体</option></select>
                  <Caret />
                </SelectFrame>
                <SelectFrame $w={47} $join>
                  <select aria-label="字号" defaultValue="11"><option>11</option></select>
                  <Caret />
                </SelectFrame>
                <Letter $w={20} aria-label="增大字号">A<sup>+</sup></Letter>
                <Letter $w={14} aria-label="减小字号">A<sup>-</sup></Letter>
              </Row>
              <Row>
                <Letter $bold>B</Letter>
                <Letter $italic>I</Letter>
                <Letter $size={11} $deco="underline">U</Letter>
                <Letter $size={11} $deco="line-through" $w={18}>A</Letter>
                <Split aria-label="边框"><BorderIcon /><Caret /></Split>
                <Split aria-label="绘图边框"><EditCellIcon /><Caret /></Split>
                <Split aria-label="填充颜色"><FillIcon /><Caret /></Split>
                <Split aria-label="字体颜色"><RedA>A</RedA><Caret /></Split>
                <Split aria-label="清除"><EraserIcon /><Caret /></Split>
              </Row>
            </Stack>
          </Group>
          <Group $w={180} $pad={3} $corner>
            <Stack $w={85}>
              <Row>
                {["top", "middle", "bottom", "outdent", "indent"].map((k) => (
                  <IconButton key={k} $w={17} $on={k === "middle"} aria-label={k}><AlignIcon kind={k} /></IconButton>
                ))}
              </Row>
              <Row>
                {["left", "center", "right", "justify", "spread"].map((k) => (
                  <IconButton key={k} $w={17} aria-label={k}><AlignIcon kind={k} /></IconButton>
                ))}
              </Row>
            </Stack>
            <BigButton w={50} icon={<MergeIcon />} label="合并居中" />
            <BigButton w={37} icon={<WrapIcon />} label="自动换行" caret={false} />
          </Group>
          <Group $w={145} $pad={4} $corner>
            <Stack $w={91}>
              <Row>
                <SelectFrame $w={91}>
                  <select aria-label="数字格式" defaultValue="常规"><option>常规</option></select>
                  <Caret />
                </SelectFrame>
              </Row>
              <Row>
                <Split aria-label="货币">
                  <Lines w={12} h={12} d="M2.500 1L6 5l3.500-4M6 5v6.500M2 5.500h8M2 8.500h8" />
                  <Caret />
                </Split>
                <Letter $size={10}>%</Letter>
                <NumLabel>{"000\n,"}</NumLabel>
                <NumLabel>{"←.0\n.00"}</NumLabel>
                <NumLabel>{".00\n→.0"}</NumLabel>
              </Row>
            </Stack>
            <BigButton w={44} icon={<ConvertIcon />} label="类型转换" />
          </Group>
          <Group $w={117}>
            <BigButton w={49} icon={<CondIcon />} label="条件格式" />
            <Stack $w={66}>
              <Small><TableStyleIcon />表格样式<Caret /></Small>
              <Small><CellStyleIcon />单元格样式<Caret /></Small>
            </Stack>
          </Group>
          <Group $w={126} $pad={2}>
            <BigButton w={30} icon={<SumIcon />} label="求和" />
            <BigButton w={30} icon={<FunnelIcon />} label="筛选" />
            <BigButton w={29} icon={<SortIcon />} label="排序" />
            <BigButton w={29} icon={<FillDownIcon />} label="填充" />
          </Group>
          <Group $w={118} $pad={2}>
            <BigButton w={37} icon={<CellIcon />} label="单元格" />
            <BigButton w={37} icon={<RowColIcon />} label="行和列" />
            <BigButton w={37} icon={<SheetIcon />} label="工作表" />
          </Group>
          <Group $w={53}><BigButton w={51} icon={<FreezeIcon />} label="冻结窗格" /></Group>
          <Group $w={53}><BigButton w={51} icon={<ToolsIcon />} label="表格工具" /></Group>
          <Group $w={66} $pad={1}>
            <BigButton w={30} icon={<FindIcon />} label="查找" />
            <BigButton w={30} icon={<OmegaIcon />} label="符号" />
          </Group>
        </Ribbon>

        <Banner role="status">
          <WarnDot>!</WarnDot>
          此工作簿已引用其他表格数据，是否更新工作簿以同步最新数据?
          <UpdateButton>更新</UpdateButton>
          <svg width="10" height="10" viewBox="0 0 10 10" aria-hidden="true">
            <circle cx="5" cy="5" r="4.500" fill="none" stroke="#6db56a" />
            <path d="M3.800 3l3 2-3 2z" fill="none" stroke="#6db56a" />
          </svg>
          <a href="#more">了解更多</a>
          <Spacer />
          <IconButton $w={8} aria-label="关闭提示">
            <Lines w={7} h={7} color="#8d8568" d="M0.500 0.500l6 6M6.500 0.500l-6 6" />
          </IconButton>
        </Banner>

        <FormulaBar>
          <NameBox>
            <input type="text" aria-label="名称框" defaultValue="H13" />
            <Caret />
          </NameBox>
          <IconButton $w={12} aria-label="浏览公式">
            <Glyph w={11} h={11}><circle cx="5" cy="5" r="4.200" /><path d="M8 8l3 3M3 4.500h4M3 6.500h4" /></Glyph>
          </IconButton>
          <FxButton>fx</FxButton>
          <FormulaInput type="text" aria-label="编辑栏" />
        </FormulaBar>

        <SheetArea>
          <GridView>
            <Grid>
              <colgroup>
                <col width="20" />
                {columns.map((c, i) => <col key={c} width={widths[i]} />)}
              </colgroup>
              <thead>
                <Tr $h={12}>
                  <ColHead aria-label="全选">
                    <CornerMark width="7" height="7" viewBox="0 0 7 7" aria-hidden="true">
                      <path d="M7 0v7H0z" fill="#c3cacf" />
                    </CornerMark>
                  </ColHead>
                  {columns.map((c) => <ColHead key={c} scope="col" $on={c === "H"}>{c}</ColHead>)}
                </Tr>
              </thead>
              <tbody>{rows.map((n) => <SheetRow key={n} n={n} />)}</tbody>
            </Grid>
          </GridView>
          <VScroll>
            <SplitGrip />
            <Caret />
            <VThumb />
            <Caret />
          </VScroll>
          <CrossCursor>
            <svg width="12" height="12" viewBox="0 0 12 12" aria-hidden="true">
              <path d="M4 1h4v3h3v4H8v3H4V8H1V4h3z" fill="#fff" stroke="#111" strokeWidth="1.200" />
            </svg>
          </CrossCursor>
          <TimerBubble>04:44</TimerBubble>
        </SheetArea>

        <SheetBar>
          <SheetNav>
            <IconButton $w={17} aria-label="第一张"><Lines w={8} h={9} color="#bcc3c8" d="M0.500 0.500v8M7 0.500l-4 4 4 4" /></IconButton>
            <IconButton $w={17} aria-label="上一张"><Lines w={8} h={9} color="#bcc3c8" d="M6 0.500l-4 4 4 4" /></IconButton>
            <IconButton $w={16} aria-label="下一张"><Lines w={8} h={9} d="M2 0.500l4 4-4 4" /></IconButton>
            <IconButton $w={17} aria-label="最后一张"><Lines w={8} h={9} d="M7.500 0.500v8M1 0.500l4 4-4 4" /></IconButton>
          </SheetNav>
          <SheetTabs>
            <SheetTab>首页</SheetTab>
            <SheetTab>备注</SheetTab>
            <SheetTab $gold>利润对账表</SheetTab>
            <SheetTab>1.当月订单表</SheetTab>
            <SheetTab $active>2.上个月未发货表</SheetTab>
            <SheetTab>3.上个月已发货未到账</SheetTab>
            <SheetTab>4.erp当月发货表</SheetTab>
            <SheetTab>5.支付宝账单</SheetTab>
            <SheetTab>6.售后明细表</SheetTab>
            <SheetTab $tight>7.刷单</SheetTab>
          </SheetTabs>
          <IconButton $w={22} aria-label="更多工作表"><Lines w={9} h={3} d="M0.500 1.500h1M4 1.500h1M7.500 1.500h1" /></IconButton>
          <IconButton $w={14} aria-label="新建工作表"><Lines w={9} h={9} d="M4.500 0.500v8M0.500 4.500h8" /></IconButton>
          <HScroll>
            <SplitGrip $v />
            <svg width="3" height="5" viewBox="0 0 3 5" aria-hidden="true"><path d="M3 0v5L0 2.500z" fill="#7b848b" /></svg>
            <HThumb />
            <svg width="3" height="5" viewBox="0 0 3 5" aria-hidden="true"><path d="M0 0v5l3-2.500z" fill="#7b848b" /></svg>
            <SplitGrip $v />
          </HScroll>
        </SheetBar>

        <StatusBar>
          <IconButton aria-label="宏"><Lines w={12} h={11} d="M4 7.500H1.500v-7h9V4M3 9.500h3M8.500 5v4q-1 2-2 0M12 5.500H9.500v2H12v2H9.500" /></IconButton>
          <Rule $m={8} $h={10} />
          <Spacer />
          <ViewButton $w={18} aria-label="护眼模式">
            <Glyph w={12} h={11}><path d="M0.500 6.500Q6 1 11.500 6.500 6 12 0.500 6.500zM2 2l1 1.500M6 0.500v2M10 2L9 3.500" /><circle cx="6" cy="6.500" r="1.800" /></Glyph>
          </ViewButton>
          <ViewButton $w={22} $on aria-label="阅读模式">
            <Lines w={11} h={10} d="M3.500 0.500h4v9h-4zM0.500 3.500h10v3h-10z" />
            <Caret />
          </ViewButton>
          <Rule $m={6} $h={9} />
          <ViewButton $w={14} $on aria-label="普通视图"><Lines w={11} h={9} d="M0.500 0.500h10v8h-10zM0.500 3.500h10M0.500 6h10M4 0.500v8M7.500 0.500v8" /></ViewButton>
          <ViewButton $w={20} aria-label="分页预览"><Lines w={10} h={10} d="M0.500 0.500h9v9h-9zM3 2v6M7 2v6M5 0.500v9" /></ViewButton>
          <ViewButton $w={16} aria-label="页面布局"><Lines w={11} h={10} d="M0.500 0.500h10v9h-10zM3.500 0.500v5h7M6.500 0.500v5" /></ViewButton>
          <Rule $m={6} $h={9} />
          <Small as="span">90%</Small>
          <ViewButton $w={10} aria-label="缩放级别"><Caret /></ViewButton>
          <ViewButton $w={17} aria-label="缩小"><Lines w={7} h={2} d="M0 1h7" sw={2} /></ViewButton>
          <ZoomRange type="range" aria-label="缩放" min="10" max="400" defaultValue="210" />
        </StatusBar>

        <TaskBar>
          <StartButton aria-label="开始">
            <svg width="12" height="12" viewBox="0 0 12 12" fill="#fff" aria-hidden="true">
              <path d="M0 1.800l5-.8v4.700H0zM5.700.9L12 0v5.700H5.700zM0 6.400h5v4.700l-5-.8zM5.700 6.400H12V12l-6.300-.9z" />
            </svg>
          </StartButton>
          <Task $w={101} $pad={5} $gap={6}>
            <svg width="11" height="13" viewBox="0 0 11 13" aria-hidden="true">
              <path d="M1 1h7l2 1v10H1z" fill="#f3cf6b" />
              <path d="M1 1l3 1v11l-3-1z" fill="#fbe7a4" />
            </svg>
            C:\Users\Adminis...
          </Task>
          <Task $w={107} $active $pad={7} $gap={3}>
            <svg width="15" height="12" viewBox="0 0 15 12" aria-hidden="true">
              <path d="M0 1h15" stroke="#f06a3c" strokeWidth="1.500" />
              <path d="M1.500 1l3.500 9L7.500 4l3 6L14 1" fill="none" stroke="#e8492b" strokeWidth="2.500" />
            </svg>
            Z-天猫对账表（按...
          </Task>
          <Task $w={102} $pad={4} $gap={3}>
            <svg width="16" height="16" viewBox="0 0 16 16" aria-hidden="true">
              <rect width="16" height="16" rx="3" fill="#fff" />
              <circle cx="8" cy="6" r="2.600" fill="none" stroke="#35a5ee" strokeWidth="1.500" />
              <circle cx="5" cy="10" r="2.300" fill="none" stroke="#2f7be8" strokeWidth="1.500" />
              <circle cx="11" cy="10" r="2.300" fill="none" stroke="#e5566d" strokeWidth="1.500" />
            </svg>
            欢迎使用百度网盘
          </Task>
          <Spacer />
          <Tray>
            {trayIcons.map(([name, art]) => (
              <TrayItem key={name} aria-label={name}>
                <svg width="12" height="12" viewBox="0 0 12 12" aria-hidden="true">{art}</svg>
              </TrayItem>
            ))}
            <TrayItem $size={9}>中</TrayItem>
            <TrayItem $w={22} aria-label="搜狗输入法"><SogouMark s={11} /></TrayItem>
            <Clock>19:38:04<br />2023/4/27</Clock>
            <TrayItem $w={24} aria-label="通知">
              <svg width="12" height="12" viewBox="0 0 12 12" aria-hidden="true">
                <path d="M0 0h11v8H6l-3 3V8H0z" fill="#f2f6f8" />
                <path d="M2 2.500h7M2 4.500h7M2 6.500h5" stroke="#1b4868" strokeWidth="0.800" />
              </svg>
              <Badge>2</Badge>
            </TrayItem>
          </Tray>
        </TaskBar>

        <ImeBar>
          <ImeLogo><SogouMark s={20} /></ImeLogo>
          <ImeItem>中</ImeItem>
          <ImeItem>•,</ImeItem>
          <ImeItem aria-label="语音">
            <Glyph w={10} h={12} color="#1a6fc0"><rect x="3.500" y="0.500" width="3" height="6" rx="1.500" fill="#1a6fc0" /><path d="M1.500 5q0 4 3.500 4t3.500-4M5 9v2M3 11.500h4" /></Glyph>
          </ImeItem>
          <ImeItem aria-label="键盘">
            <Glyph w={10} h={9} color="#2c7cc8"><path d="M0.500 0.500h9v8h-9z" fill="#dcecfa" /><path d="M2 2.500h6M2 4.500h6" strokeDasharray="1 1" /><path d="M3 6.500h4" /></Glyph>
          </ImeItem>
          <ImeItem aria-label="皮肤">
            <svg width="10" height="9" viewBox="0 0 10 9" aria-hidden="true"><path d="M3 0q2 2 4 0l3 2-1 2.500-1.500-.5v5h-5V4L1 4.500 0 2z" fill="#1a6fc0" /></svg>
          </ImeItem>
          <ImeItem aria-label="工具箱">
            <svg width="9" height="9" viewBox="0 0 9 9" fill="none" strokeWidth="1.500" aria-hidden="true">
              <path d="M1 1h2v2H1zM1 6h2v2H1z" stroke="#4a6fe0" />
              <path d="M6 1h2v2H6zM6 6h2v2H6z" stroke="#8a5bd8" />
            </svg>
          </ImeItem>
        </ImeBar>
        <Subtitle>这个退款金额其实不用管他</Subtitle>
      </Window>
    </>
  );
}
